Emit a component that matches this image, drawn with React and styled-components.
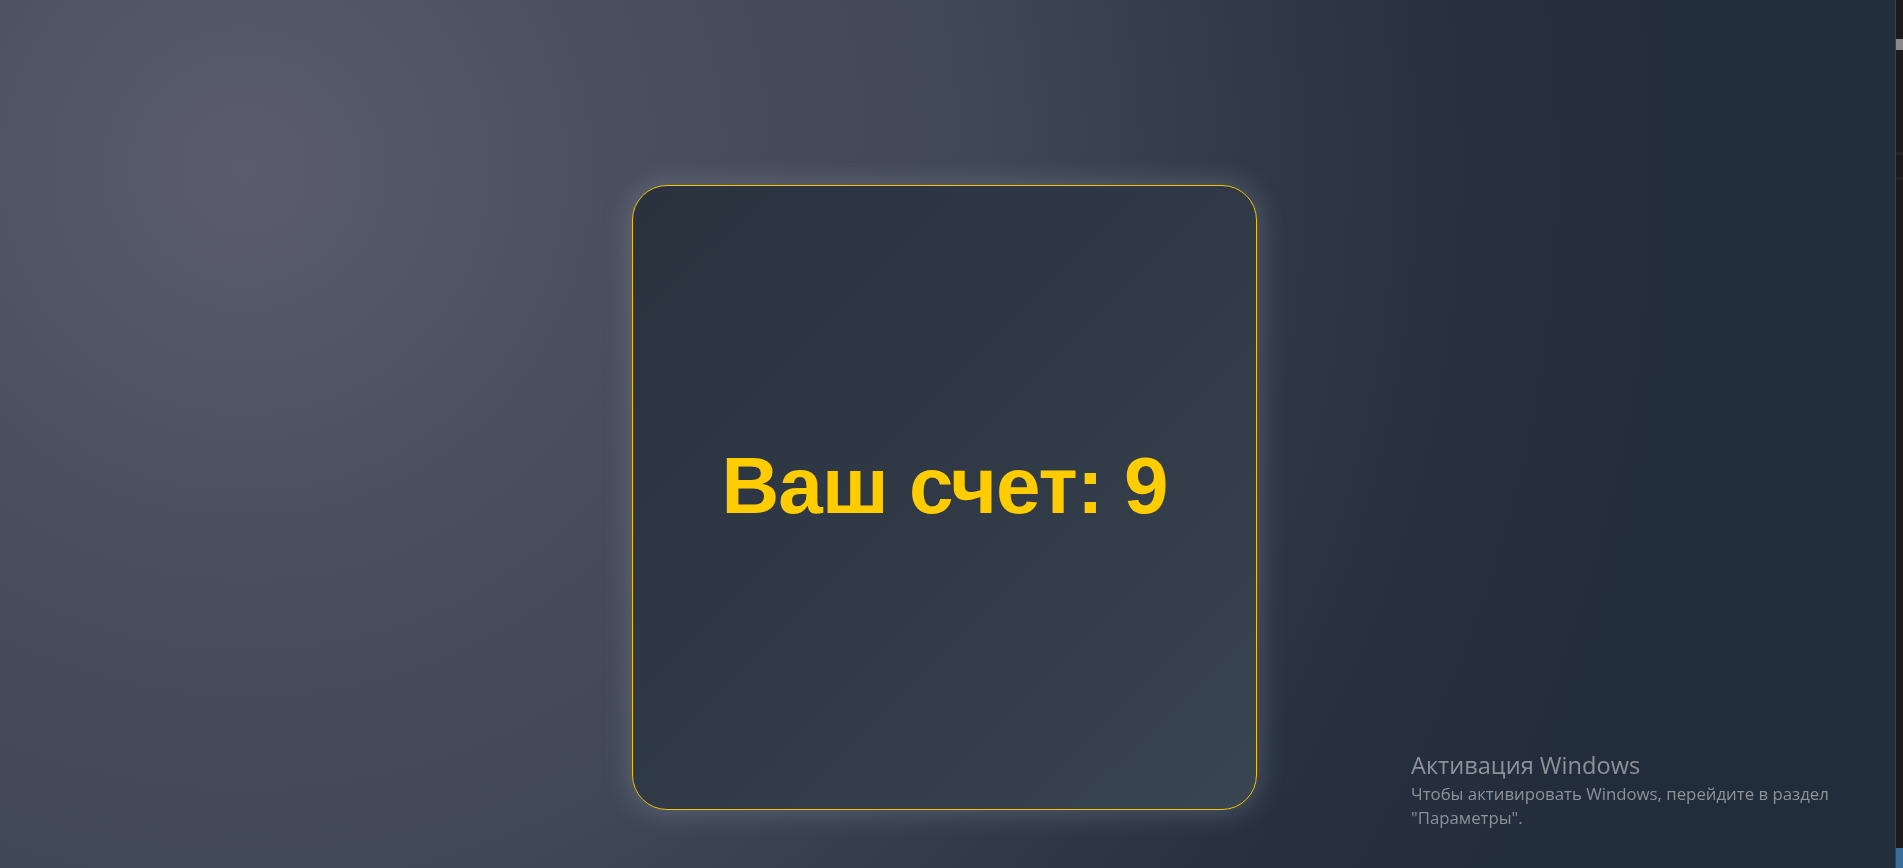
import React from "react";
import styled, { createGlobalStyle } from "styled-components";

const Global = createGlobalStyle`
  html, body { margin: 0; padding: 0; height: 100%; overflow: hidden; }
  #root { height: 100%; }
`;

const Screen = styled.div`
  display: flex;
  width: 100vw;
  height: 100vh;
`;

const Stage = styled.main`
  flex: 1;
  display: flex;
  justify-content: center;
  align-items: flex-start;
  padding: 185px 6px 0 0;
  background: radial-gradient(
    circle at 245px 170px,
    #5b5d6c 0px,
    #4b4f5e 360px,
    #404756 740px,
    #343c4a 960px,
    #262f3d 1250px,
    #222d3b 1500px
  );
`;

const Card = styled.section`
  box-sizing: border-box;
  width: 625px;
  height: 625px;
  border: 1.5px solid #f5c400;
  border-radius: 35px;
  background: linear-gradient(135deg, #2a323e 0%, #2f3845 45%, #3a4552 100%);
  box-shadow: 0 0 26px 3px rgba(150, 160, 180, 0.32);
  display: flex;
  align-items: center;
  justify-content: center;
`;

const Score = styled.h1`
  margin: 0 0 24px 0;
  font-family: "Liberation Sans", Arial, sans-serif;
  font-weight: 700;
  font-size: 80px;
  line-height: 1;
  color: #ffcc00;
  letter-spacing: -0.9px;
`;

const Rail = styled.aside`
  box-sizing: border-box;
  width: 8px;
  background: #1b1b1b;
  border-left: 1px solid #3c4048;
  display: grid;
  grid-template-rows: 39px 11px 102px 3px 22px 3px 1fr 20px;
`;

const Mark = styled.div`
  grid-row: ${(p) => p.$row};
  background: ${(p) => p.$c};
`;

const Watermark = styled.div`
  position: fixed;
  left: 1411px;
  top: 751px;
  font-family: "Open Sans", "Noto Sans", sans-serif;
  color: #8d9299;
  pointer-events: none;
`;

const WmTitle = styled.div`
  font-size: 23.6px;
  line-height: 29px;
`;

const WmText = styled.div`
  font-size: 16.8px;
  line-height: 24px;
  margin-top: 2px;
`;

export default function App() {
  return (
    <>
      <Global />
      <Screen>
        <Stage>
          <Card>
            <Score>Ваш счет: 9</Score>
          </Card>
        </Stage>
        <Rail>
          <Mark $row={2} $c="#8a8a8a" />
          <Mark $row={4} $c="#262626" />
          <Mark $row={6} $c="#262626" />
          <Mark $row={8} $c="#3a6e9a" />
        </Rail>
      </Screen>
      <Watermark>
        <WmTitle>Активация Windows</WmTitle>
        <WmText>
          Чтобы активировать Windows, перейдите в раздел
          <br />
          "Параметры".
        </WmText>
      </Watermark>
    </>
  );
}
